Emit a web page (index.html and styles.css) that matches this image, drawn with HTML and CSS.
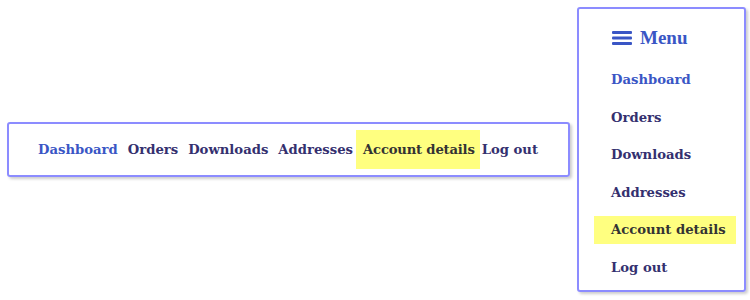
FILE: index.html
```html
<!DOCTYPE html>
<html lang="en">
<head>
    <meta charset="UTF-8">
    <meta name="viewport" content="width=device-width, initial-scale=1.0">
    <title>Account Navigation</title>
    <link rel="stylesheet" href="styles.css">
</head>
<body>
    <div class="page">
        <nav class="account-nav">
            <a href="#" class="nav-link active">Dashboard</a>
            <a href="#" class="nav-link">Orders</a>
            <a href="#" class="nav-link">Downloads</a>
            <a href="#" class="nav-link">Addresses</a>
            <a href="#" class="nav-link highlight">Account details</a>
            <a href="#" class="nav-link logout">Log out</a>
        </nav>

        <nav class="side-menu">
            <div class="menu-title">
                <svg class="menu-icon" width="20" height="14" viewBox="0 0 20 14">
                    <rect x="0" y="0" width="20" height="3" rx="1" fill="#3a56c5"/>
                    <rect x="0" y="5.5" width="20" height="3" rx="1" fill="#3a56c5"/>
                    <rect x="0" y="11" width="20" height="3" rx="1" fill="#3a56c5"/>
                </svg>
                <span>Menu</span>
            </div>
            <ul class="menu-list">
                <li><a href="#" class="menu-link active">Dashboard</a></li>
                <li><a href="#" class="menu-link">Orders</a></li>
                <li><a href="#" class="menu-link">Downloads</a></li>
                <li><a href="#" class="menu-link">Addresses</a></li>
                <li><a href="#" class="menu-link highlight">Account details</a></li>
                <li><a href="#" class="menu-link">Log out</a></li>
            </ul>
        </nav>
    </div>
</body>
</html>
```

FILE: styles.css
```css
body {
    margin: 0;
    padding: 0;
    background: #ffffff;
    font-family: "DejaVu Serif", Georgia, serif;
    font-weight: bold;
}
a {
    text-decoration: none;
    color: #34306f;
    white-space: nowrap;
}
.page {
    display: flex;
    align-items: center;
    justify-content: space-between;
    height: 300px;
    box-sizing: border-box;
    padding: 7px 4px 8px 7px;
}
.account-nav {
    display: flex;
    align-items: center;
    gap: 10px;
    width: 563px;
    height: 55px;
    box-sizing: border-box;
    padding: 0 29px;
    margin-top: -1px;
    border: 2px solid #8c8cff;
    border-radius: 3px;
    box-shadow: 2px 2px 3px rgba(0, 0, 0, 0.2);
    font-size: 13.2px;
}
.nav-link {
    line-height: 39px;
}
.nav-link.active,
.menu-link.active {
    color: #3a56c5;
}
.nav-link.highlight {
    background: #ffff80;
    color: #333333;
    padding: 0 5px 0 7px;
    margin-left: -7px;
    margin-right: -8px;
    letter-spacing: -0.2px;
}
.side-menu {
    width: 169px;
    height: 285px;
    box-sizing: border-box;
    border: 2px solid #8c8cff;
    border-radius: 3px;
    box-shadow: 2px 2px 3px rgba(0, 0, 0, 0.2);
    padding: 14px 0 0 15px;
}
.menu-title {
    display: flex;
    align-items: center;
    gap: 8px;
    padding-left: 18px;
    color: #3a56c5;
    font-family: "Liberation Serif", "Times New Roman", serif;
    font-size: 19px;
    height: 30px;
}
.menu-list {
    list-style: none;
    margin: 13px 0 0;
    padding: 0;
    display: flex;
    flex-direction: column;
    gap: 9.5px;
    font-size: 13.2px;
}
.menu-link {
    display: inline-block;
    line-height: 28px;
    padding: 0 10px 0 17px;
}
.menu-link.highlight {
    background: #ffff80;
    color: #333333;
}
```
